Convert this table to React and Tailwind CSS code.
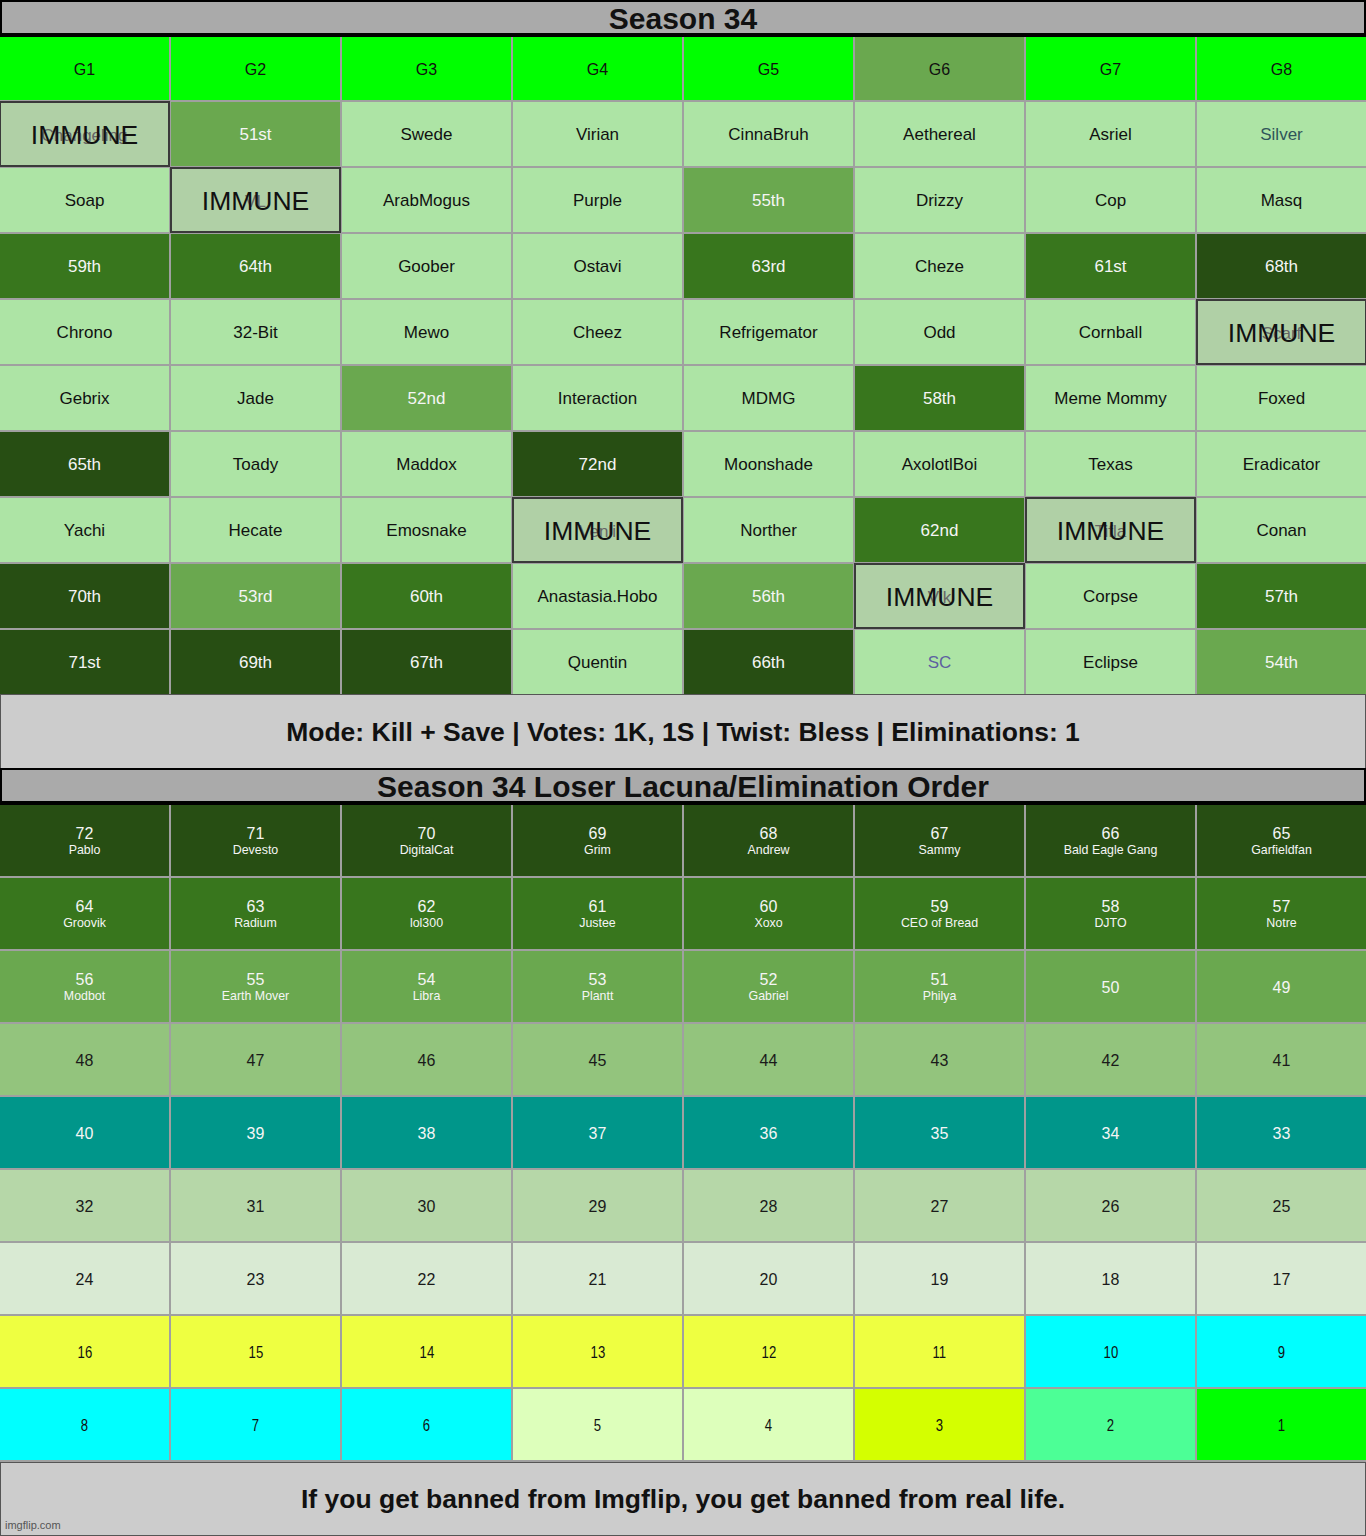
import React from 'react';

const LIGHT = 'bg-[#ade4a5] text-[#111]';
const MID = 'bg-[#6aa84f] text-[#f5f5f5]';
const DARK1 = 'bg-[#38761d] text-[#f5f5f5]';
const DARK2 = 'bg-[#274e13] text-[#f5f5f5]';

const headers = ['G1', 'G2', 'G3', 'G4', 'G5', 'G6', 'G7', 'G8'];

// [text, style] ; style: l light, m mid, d1, d2, i immune, t teal text, p purple text
const board = [
    [['Changeling', 'i'], ['51st', 'm'], ['Swede', 'l'], ['Virian', 'l'], ['CinnaBruh', 'l'], ['Aethereal', 'l'], ['Asriel', 'l'], ['Silver', 't']],
    [['Soap', 'l'], ['VL', 'i'], ['ArabMogus', 'l'], ['Purple', 'l'], ['55th', 'm'], ['Drizzy', 'l'], ['Cop', 'l'], ['Masq', 'l']],
    [['59th', 'd1'], ['64th', 'd1'], ['Goober', 'l'], ['Ostavi', 'l'], ['63rd', 'd1'], ['Cheze', 'l'], ['61st', 'd1'], ['68th', 'd2']],
    [['Chrono', 'l'], ['32-Bit', 'l'], ['Mewo', 'l'], ['Cheez', 'l'], ['Refrigemator', 'l'], ['Odd', 'l'], ['Cornball', 'l'], ['Scarf', 'i']],
    [['Gebrix', 'l'], ['Jade', 'l'], ['52nd', 'm'], ['Interaction', 'l'], ['MDMG', 'l'], ['58th', 'd1'], ['Meme Mommy', 'l'], ['Foxed', 'l']],
    [['65th', 'd2'], ['Toady', 'l'], ['Maddox', 'l'], ['72nd', 'd2'], ['Moonshade', 'l'], ['AxolotlBoi', 'l'], ['Texas', 'l'], ['Eradicator', 'l']],
    [['Yachi', 'l'], ['Hecate', 'l'], ['Emosnake', 'l'], ['Venli', 'i'], ['Norther', 'l'], ['62nd', 'd1'], ['Tifla', 'i'], ['Conan', 'l']],
    [['70th', 'd2'], ['53rd', 'm'], ['60th', 'd1'], ['Anastasia.Hobo', 'l'], ['56th', 'm'], ['Vik', 'i'], ['Corpse', 'l'], ['57th', 'd1']],
    [['71st', 'd2'], ['69th', 'd2'], ['67th', 'd2'], ['Quentin', 'l'], ['66th', 'd2'], ['SC', 'p'], ['Eclipse', 'l'], ['54th', 'm']],
];

const styleFor = {
    l: LIGHT,
    m: MID,
    d1: DARK1,
    d2: DARK2,
    t: 'bg-[#ade4a5] text-[#2f5559]',
    p: 'bg-[#ade4a5] text-[#5d5fa0]',
};

const losers = [
    ['Pablo', 'Devesto', 'DigitalCat', 'Grim', 'Andrew', 'Sammy', 'Bald Eagle Gang', 'Garfieldfan'],
    ['Groovik', 'Radium', 'lol300', 'Justee', 'Xoxo', 'CEO of Bread', 'DJTO', 'Notre'],
    ['Modbot', 'Earth Mover', 'Libra', 'Plantt', 'Gabriel', 'Philya', '', ''],
];

const rowColors = [
    'bg-[#274e13] text-[#f5f5f5]',
    'bg-[#38761d] text-[#f5f5f5]',
    'bg-[#6aa84f] text-[#f5f5f5]',
    'bg-[#93c47d] text-[#1a1a1a]',
    'bg-[#00968a] text-[#f5f5f5]',
    'bg-[#b6d7a8] text-[#1a1a1a]',
    'bg-[#d9ead3] text-[#1a1a1a]',
];

const lastRows = [
    [
        [16, 'bg-[#eeff41]'], [15, 'bg-[#eeff41]'], [14, 'bg-[#eeff41]'], [13, 'bg-[#eeff41]'],
        [12, 'bg-[#eeff41]'], [11, 'bg-[#eeff41]'], [10, 'bg-[#00ffff]'], [9, 'bg-[#00ffff]'],
    ],
    [
        [8, 'bg-[#00ffff]'], [7, 'bg-[#00ffff]'], [6, 'bg-[#00ffff]'], [5, 'bg-[#ddffbb]'],
        [4, 'bg-[#ddffbb]'], [3, 'bg-[#d4ff00]'], [2, 'bg-[#4cff96]'], [1, 'bg-[#00ff00]'],
    ],
];

const TitleBar = ({ children }) => (
    <div className="h-[37px] bg-[#aaaaaa] border-2 border-b-4 border-black flex items-center justify-center">
        <span className="text-[30px] font-bold text-[#111] leading-none mt-[3px]">{children}</span>
    </div>
);

const App = () => {
    return (
        <div className="w-[1366px] h-[1536px] bg-white font-['Liberation_Sans',Arial,sans-serif] overflow-hidden flex flex-col">
            <TitleBar>Season 34</TitleBar>

            {/* main board */}
            <div className="grid grid-cols-8 gap-[2px] bg-[#a0a0a0]">
                {headers.map((h, i) => (
                    <div
                        key={h}
                        className={`h-[63px] pt-[2px] flex items-center justify-center text-[16px] text-[#111] ${
                            i === 5 ? 'bg-[#6aa84f]' : 'bg-[#00ff00]'
                        }`}
                    >
                        {h}
                    </div>
                ))}
                {board.map((row, r) =>
                    row.map(([text, kind], c) =>
                        kind === 'i' ? (
                            <div
                                key={`${r}-${c}`}
                                className="relative z-10 h-[64px] bg-[#b0d0a6] outline-2 outline-[#3a3a3a] -outline-offset-1 flex items-center justify-center"
                            >
                                <span className="absolute inset-0 pt-[3px] flex items-center justify-center text-[17px] text-[#666]">
                                    {text}
                                </span>
                                <span className="relative text-[26.5px] text-[#111] mt-[4px]">IMMUNE</span>
                            </div>
                        ) : (
                            <div
                                key={`${r}-${c}`}
                                className={`h-[64px] pt-[2px] flex items-center justify-center text-[17px] ${styleFor[kind]}`}
                            >
                                {text}
                            </div>
                        )
                    )
                )}
            </div>

            <div className="h-[74px] bg-[#cccccc] border-x border-t border-[#555] flex items-center justify-center">
                <span className="text-[26.5px] font-bold text-[#111] mt-[2px]">
                    Mode: Kill + Save | Votes: 1K, 1S | Twist: Bless | Eliminations: 1
                </span>
            </div>

            <TitleBar>Season 34 Loser Lacuna/Elimination Order</TitleBar>

            {/* elimination order */}
            <div className="grid grid-cols-8 gap-[2px] bg-[#a0a0a0] pb-[2px]">
                {rowColors.map((color, r) =>
                    Array.from({ length: 8 }).map((_, c) => {
                        const num = 72 - r * 8 - c;
                        const name = losers[r] ? losers[r][c] : '';
                        return (
                            <div
                                key={num}
                                className={`h-[71px] pt-[2px] flex flex-col items-center justify-center ${color}`}
                            >
                                <span className="text-[16px] leading-[18px]">{num}</span>
                                {name && <span className="text-[12.4px] leading-[15px]">{name}</span>}
                            </div>
                        );
                    })
                )}
                {lastRows.map((row) =>
                    row.map(([num, bg]) => (
                        <div
                            key={num}
                            className={`h-[71px] pt-[3px] flex items-center justify-center text-[16px] text-[#111] ${bg}`}
                        >
                            <span className="inline-block scale-x-[0.82]">{num}</span>
                        </div>
                    ))
                )}
            </div>

            <div className="relative flex-1 bg-[#cccccc] border border-[#555] flex items-center justify-center">
                <span className="text-[26.5px] font-bold text-[#111] mt-[2px]">
                    If you get banned from Imgflip, you get banned from real life.
                </span>
                <span className="absolute left-[4px] bottom-[2px] text-[11px] text-[#555]">imgflip.com</span>
            </div>
        </div>
    );
};

export default App;
